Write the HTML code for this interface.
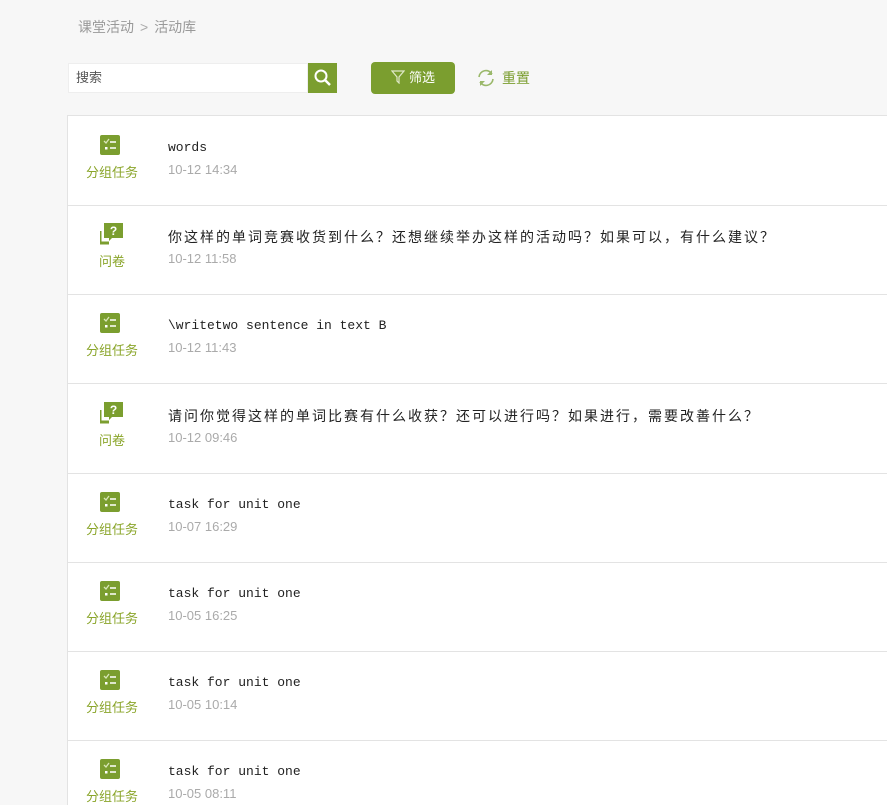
<!DOCTYPE html>
<html><head><meta charset="utf-8"><style>
html,body{margin:0;overflow:hidden;height:805px}
body{background:#f7f7f7;font-family:"Liberation Sans","Noto Sans CJK SC",sans-serif;width:887px;position:relative}
.bc{position:absolute;left:78px;top:17px;font-size:14px;color:#999}
.bc span{margin:0 6px;color:#aaa}
.search{position:absolute;left:68px;top:63px;width:240px;height:30px;background:#fff;border:1px solid #eee;box-sizing:border-box;font-size:13px;color:#555;line-height:28px;padding-left:7px}
.sbtn{position:absolute;left:308px;top:63px;width:29px;height:30px;background:#7b9e2f}
.filter{position:absolute;left:371px;top:62px;width:84px;height:32px;background:#7b9e2f;border-radius:4px;color:#fff;font-size:13px;line-height:32px;text-align:center}
.reset{position:absolute;left:476px;top:68px;font-size:14px;color:#7b9e2f}
.list{position:absolute;left:67px;top:115px;width:830px;height:690px;background:#fff;border:1px solid #e3e3e3;border-bottom:none;box-sizing:border-box;overflow:hidden}
.row{position:absolute;left:0;right:0;height:89px;border-bottom:1px solid #e3e3e3}
.ic{position:absolute;left:32px;top:19px;width:20px;height:20px}
.lb{position:absolute;left:0;width:88px;top:46px;text-align:center;font-size:13px;color:#8aa52a}
.t{position:absolute;left:100px;top:24px;font-family:"Liberation Mono","Noto Sans CJK SC",monospace;font-size:13px;color:#222}
.t .c{font-size:14px;letter-spacing:2px;position:relative;top:-2px}
.d{position:absolute;left:100px;top:46px;font-size:13px;color:#aaa}
</style></head><body>
<svg width="0" height="0" style="position:absolute"><defs>
<symbol id="task" viewBox="0 0 20 20"><rect width="20" height="20" rx="2" fill="#7b9e2f"/><path d="M4 6l2 2 3-4" fill="none" stroke="#d9e6b8" stroke-width="1.3"/><path d="M10 7h6M10 13h6" stroke="#fff" stroke-width="1.6"/><rect x="5" y="12" width="2.5" height="2.5" fill="#fff"/></symbol>
<symbol id="q" viewBox="0 0 24 24"><path d="M4 1h19v15h-11l-3 3v-3h-5z" fill="#7b9e2f"/><path d="M0 9v12h9" fill="none" stroke="#7b9e2f" stroke-width="3"/><text x="13.5" y="13" font-size="12" font-weight="bold" fill="#fff" text-anchor="middle" font-family="Liberation Sans">?</text></symbol>
</defs></svg>
<div class="bc">课堂活动<span>&gt;</span>活动库</div>
<div class="search">搜索</div>
<div class="sbtn"><svg width="29" height="30"><circle cx="13" cy="13" r="5.5" fill="none" stroke="#fff" stroke-width="2"/><path d="M17 17l5 5" stroke="#fff" stroke-width="2.5"/></svg></div>
<div class="filter"><svg width="14" height="14" style="vertical-align:-2px;margin-right:4px"><path d="M1 1h12l-5 6v6l-2-2v-4z" fill="none" stroke="#dfe8c8" stroke-width="1.2"/></svg>筛选</div>
<div class="reset"><svg width="20" height="20" style="vertical-align:-5px;margin-right:6px"><path d="M3 9a7 7 0 0 1 13-3M17 11a7 7 0 0 1-13 3" fill="none" stroke="#9ab86a" stroke-width="1.6"/><path d="M16 2v5h-5z" fill="#9ab86a"/><path d="M4 18v-5h5z" fill="#9ab86a"/></svg>重置</div>
<div class="list">
<div class="row" style="top:0"><svg class="ic"><use href="#task"/></svg><div class="lb">分组任务</div><div class="t">words</div><div class="d">10-12 14:34</div></div>
<div class="row" style="top:89px"><svg class="ic" style="top:17px;width:24px;height:24px"><use href="#q"/></svg><div class="lb">问卷</div><div class="t"><span class="c">你这样的单词竞赛收货到什么？还想继续举办这样的活动吗？如果可以，有什么建议？</span></div><div class="d">10-12 11:58</div></div>
<div class="row" style="top:178px"><svg class="ic"><use href="#task"/></svg><div class="lb">分组任务</div><div class="t">\writetwo sentence in text B</div><div class="d">10-12 11:43</div></div>
<div class="row" style="top:268px"><svg class="ic" style="top:17px;width:24px;height:24px"><use href="#q"/></svg><div class="lb">问卷</div><div class="t"><span class="c">请问你觉得这样的单词比赛有什么收获？还可以进行吗？如果进行，需要改善什么？</span></div><div class="d">10-12 09:46</div></div>
<div class="row" style="top:357px"><svg class="ic"><use href="#task"/></svg><div class="lb">分组任务</div><div class="t">task for unit one</div><div class="d">10-07 16:29</div></div>
<div class="row" style="top:446px"><svg class="ic"><use href="#task"/></svg><div class="lb">分组任务</div><div class="t">task for unit one</div><div class="d">10-05 16:25</div></div>
<div class="row" style="top:535px"><svg class="ic"><use href="#task"/></svg><div class="lb">分组任务</div><div class="t">task for unit one</div><div class="d">10-05 10:14</div></div>
<div class="row" style="top:624px"><svg class="ic"><use href="#task"/></svg><div class="lb">分组任务</div><div class="t">task for unit one</div><div class="d">10-05 08:11</div></div>
</div>
</body></html>
